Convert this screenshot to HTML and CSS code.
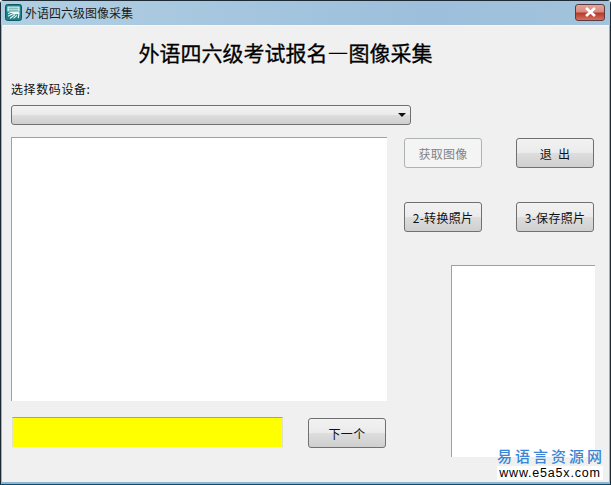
FILE: index.html
```html
<!DOCTYPE html>
<html lang="zh-CN">
<head>
<meta charset="utf-8">
<title>外语四六级图像采集</title>
<link rel="stylesheet" href="styles.css">
</head>
<body>
<div class="window">
  <header class="titlebar">
    <svg class="app-icon" viewBox="0 0 17 17" width="17" height="17" aria-hidden="true">
      <rect x="0.5" y="0.5" width="16" height="16" rx="2" fill="#1d7f86" stroke="#0d5a60"/>
      <path d="M3 3.2h11v3.8H3zM3 5.1h11" fill="none" stroke="#e6f7f5" stroke-width="1.2"/>
      <path d="M3 9.8l3-1.5h8.4M3 12.2l5-2.6h6l-.8 4.6M5 14.4l5-3.8M8.5 14.4l3.4-3" fill="none" stroke="#e6f7f5" stroke-width="1.2"/>
    </svg>
    <span class="window-title">外语四六级图像采集</span>
    <button class="close" type="button" aria-label="关闭">
      <svg viewBox="0 0 11 9" width="13" height="10" aria-hidden="true">
        <path d="M1.5 1l8 7M9.5 1l-8 7" stroke="#fff" stroke-width="2.4" fill="none"/>
      </svg>
    </button>
  </header>
  <main class="client">
    <h1 class="heading">外语四六级考试报名—图像采集</h1>
    <label class="device-label">选择数码设备:</label>
    <div class="combo"><span class="combo-arrow"></span></div>
    <div class="workspace">
      <section class="left-col">
        <div class="pane preview"></div>
        <div class="status-row">
          <div class="status"></div>
          <button class="btn" type="button">下一个</button>
        </div>
      </section>
      <section class="right-col">
        <div class="btn-row">
          <button class="btn disabled" type="button">获取图像</button>
          <button class="btn exit" type="button">退 出</button>
        </div>
        <div class="btn-row">
          <button class="btn" type="button">2-转换照片</button>
          <button class="btn" type="button">3-保存照片</button>
        </div>
        <div class="pane photo"></div>
      </section>
    </div>
  </main>
  <div class="watermark">
    <div class="wm-cn">易语言资源网</div>
    <div class="wm-url">www.e5a5x.com</div>
  </div>
</div>
</body>
</html>
```
FILE: styles.css
```css
* { box-sizing: border-box; }
html, body { margin: 0; padding: 0; }
body {
  width: 611px;
  height: 485px;
  overflow: hidden;
  font-family: "Noto Sans CJK SC", "Liberation Sans", sans-serif;
  font-size: 12px;
  color: #111;
}
.window {
  position: relative;
  width: 611px;
  height: 485px;
  display: flex;
  flex-direction: column;
  background: #8fb4d2;
  border: 1px solid #1c2a36;
  border-bottom-color: #0f4c6a;
  border-radius: 4px 4px 0 0;
}
.titlebar {
  height: 24px;
  flex: none;
  display: flex;
  align-items: center;
  padding: 0 5px 2px 4px;
  background: linear-gradient(90deg, #b2cfe2 0%, #a8c8e0 30%, #9dbfdb 70%, #a3c3dc 100%);
}
.app-icon { flex: none; }
.window-title { margin-left: 3px; font-size: 12px; color: #1a1a1a; }
.close {
  margin-left: auto;
  width: 30px;
  height: 17px;
  padding: 0;
  display: flex;
  align-items: center;
  justify-content: center;
  border: 1px solid #5e3a3c;
  border-radius: 3px;
  background: linear-gradient(#e0a79e 0%, #d88a7c 45%, #b93a2c 55%, #d2705f 100%);
}
.client {
  flex: 1;
  margin: 0 1px 2px;
  padding: 0 0 0 9px;
  background: #f0f0f0;
  border-top: 1px solid #f7f7f7;
}
.heading {
  margin: 14px 0 0;
  width: 549px;
  height: 24px;
  line-height: 24px;
  text-align: center;
  font-size: 21px;
  font-weight: 400;
  -webkit-text-stroke: 0.3px #000;
  color: #000;
}
.device-label {
  display: block;
  margin-top: 16px;
  height: 17px;
  line-height: 17px;
  font-size: 12px;
  letter-spacing: .6px;
}
.combo {
  position: relative;
  margin-top: 8px;
  width: 400px;
  height: 20px;
  border: 1px solid #707070;
  border-radius: 3px;
  background: linear-gradient(#f2f2f2 0%, #ebebeb 48%, #dddddd 52%, #cfcfcf 100%);
}
.combo-arrow {
  position: absolute;
  right: 4px;
  top: 7px;
  border-left: 4px solid transparent;
  border-right: 4px solid transparent;
  border-top: 4px solid #111;
}
.workspace {
  display: flex;
  margin-top: 12px;
}
.left-col { width: 376px; flex: none; }
.pane {
  background: #fff;
  border-top: 1px solid #a0a0a0;
  border-left: 1px solid #a0a0a0;
}
.preview { height: 264px; }
.status-row {
  display: flex;
  justify-content: space-between;
  align-items: flex-end;
  margin-top: 16px;
  padding-right: 1px;
}
.status {
  width: 271px;
  height: 31px;
  margin-left: 1px;
  background: #ffff00;
  border-top: 1px solid #a0a0a0;
  border-left: 1px solid #e3e3c8;
  border-right: 1px solid #e3e3c8;
  border-bottom: 1px solid #f3f3c0;
}
.right-col {
  margin-left: 17px;
  width: 190px;
  display: flex;
  flex-direction: column;
}
.btn-row {
  display: flex;
  justify-content: space-between;
  margin-top: 1px;
  margin-bottom: 33px;
}
.btn {
  width: 78px;
  height: 30px;
  padding: 0;
  border: 1px solid #707070;
  border-radius: 3px;
  background: linear-gradient(#f2f2f2 0%, #ebebeb 48%, #dddddd 52%, #cfcfcf 100%);
  font: inherit;
  letter-spacing: .3px;
  color: #111;
}
.btn.disabled {
  border-color: #adb2b5;
  background: #f4f4f4;
  color: #838383;
}
.btn.exit { word-spacing: 3px; }
.photo {
  width: 144px;
  height: 192px;
  margin-left: 47px;
}
.watermark {
  position: absolute;
  right: 7px;
  bottom: 4px;
  width: 106px;
  text-align: center;
}
.wm-cn {
  font-family: "Noto Sans CJK SC", sans-serif;
  font-size: 15px;
  line-height: 17px;
  margin-bottom: 2px;
  letter-spacing: 3px;
  font-weight: 500;
  color: #3a86d4;
  white-space: nowrap;
}
.wm-url {
  font-family: "Liberation Sans", sans-serif;
  font-size: 12.5px;
  line-height: 14px;
  letter-spacing: .8px;
  color: #000;
  background: #fff;
  white-space: nowrap;
}
```
